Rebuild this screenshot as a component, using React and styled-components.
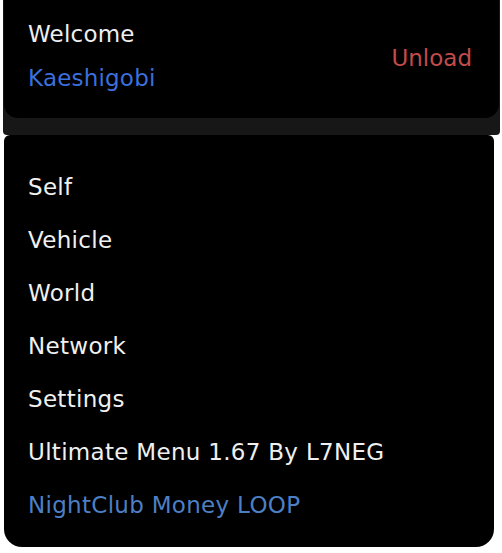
import React from 'react';
import styled, { createGlobalStyle } from 'styled-components';

const GlobalStyle = createGlobalStyle`
  html, body {
    margin: 0;
    padding: 0;
    background: #ffffff;
  }
  body {
    font-family: "DejaVu Sans", "Liberation Sans", sans-serif;
  }
`;

const Shell = styled.div`
  width: 502px;
  height: 553px;
  display: flex;
  flex-direction: column;
  background: #ffffff;
`;

// faixa cinza escura atras do cabecalho
const TopBand = styled.div`
  margin: 0 2px 0 3px;
  padding: 0 1px 17px 1px;
  background: #171717;
  border-radius: 0 0 4px 4px;
`;

const HeaderCard = styled.header`
  height: 118px;
  box-sizing: border-box;
  background: #000000;
  border-radius: 0 0 14px 14px;
  display: flex;
  align-items: center;
  justify-content: space-between;
  padding: 0 27px 6px 24px;
`;

const UserBox = styled.div`
  display: flex;
  flex-direction: column;
  gap: 16px;
`;

const Label = styled.span`
  font-size: 23px;
  line-height: 28px;
  letter-spacing: 0.2px;
  color: ${(p) => p.$color || '#eeeeee'};
`;

const UnloadButton = styled.button`
  background: transparent;
  border: none;
  padding: 0;
  font-family: inherit;
  font-size: 23px;
  line-height: 28px;
  color: #c24b4b;
  cursor: pointer;
  margin-top: 3px;
`;

const BodyCard = styled.nav`
  margin: 0 8px 0 4px;
  background: #000000;
  border-radius: 6px 6px 18px 18px;
  padding: 25px 0 16px 24px;
  display: flex;
  flex-direction: column;
`;

const MenuItem = styled.div`
  height: 53px;
  display: flex;
  align-items: center;
  font-size: 23px;
  letter-spacing: 0.3px;
  color: ${(p) => (p.$accent ? '#4d7fc4' : '#f0f0f0')};
  cursor: pointer;
`;

const itens = [
  'Self',
  'Vehicle',
  'World',
  'Network',
  'Settings',
  'Ultimate Menu 1.67 By L7NEG',
];

export default function App() {
  return (
    <>
      <GlobalStyle />
      <Shell>
        <TopBand>
          <HeaderCard>
            <UserBox>
              <Label>Welcome</Label>
              <Label $color="#3b6fdc">Kaeshigobi</Label>
            </UserBox>
            <UnloadButton>Unload</UnloadButton>
          </HeaderCard>
        </TopBand>
        <BodyCard>
          {itens.map((item) => (
            <MenuItem key={item}>{item}</MenuItem>
          ))}
          <MenuItem $accent>NightClub Money LOOP</MenuItem>
        </BodyCard>
      </Shell>
    </>
  );
}
